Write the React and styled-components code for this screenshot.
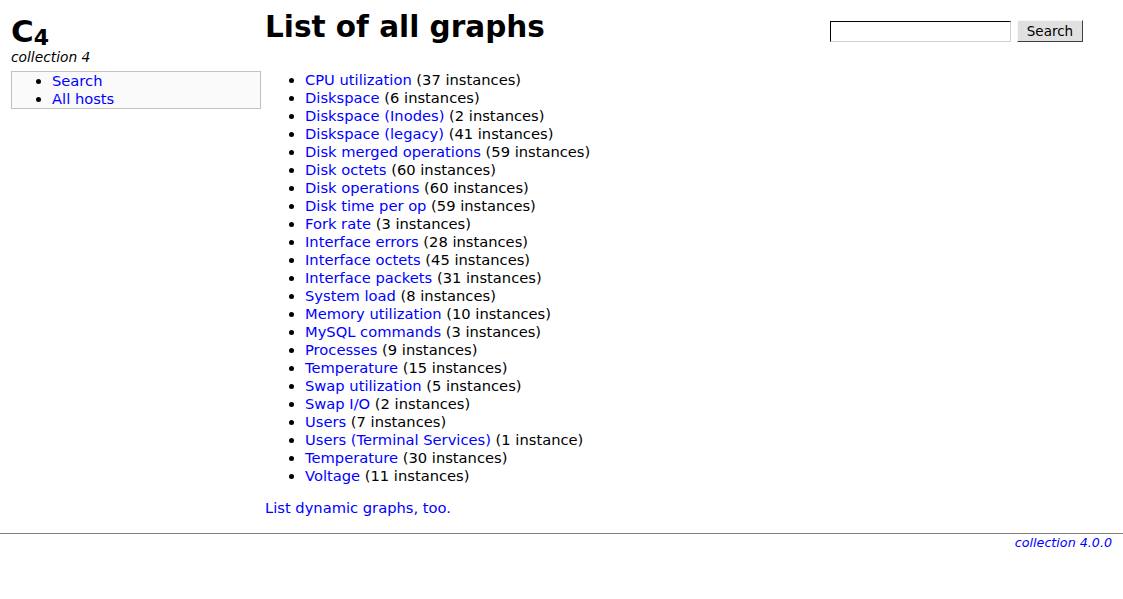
import React from "react";
import styled, { createGlobalStyle } from "styled-components";

const graphs = [
  ["CPU utilization", "37 instances"],
  ["Diskspace", "6 instances"],
  ["Diskspace (Inodes)", "2 instances"],
  ["Diskspace (legacy)", "41 instances"],
  ["Disk merged operations", "59 instances"],
  ["Disk octets", "60 instances"],
  ["Disk operations", "60 instances"],
  ["Disk time per op", "59 instances"],
  ["Fork rate", "3 instances"],
  ["Interface errors", "28 instances"],
  ["Interface octets", "45 instances"],
  ["Interface packets", "31 instances"],
  ["System load", "8 instances"],
  ["Memory utilization", "10 instances"],
  ["MySQL commands", "3 instances"],
  ["Processes", "9 instances"],
  ["Temperature", "15 instances"],
  ["Swap utilization", "5 instances"],
  ["Swap I/O", "2 instances"],
  ["Users", "7 instances"],
  ["Users (Terminal Services)", "1 instance"],
  ["Temperature", "30 instances"],
  ["Voltage", "11 instances"],
];

const GlobalStyle = createGlobalStyle`
  body {
    margin: 0;
    background: #fff;
    color: #000;
    font-family: "DejaVu Sans", Verdana, sans-serif;
    font-size: 14.7px;
    line-height: 18px;
  }
  a {
    color: #0000ff;
    text-decoration: none;
  }
`;

const Page = styled.div`
  display: flex;
  align-items: flex-start;
  padding: 0 40px 0 11px;
`;

const Sidebar = styled.div`
  width: 250px;
  flex: none;
`;

const Logo = styled.div`
  font-size: 31px;
  font-weight: bold;
  line-height: 34px;
  margin-top: 14px;
  height: 32px;

  sub {
    font-size: 22px;
    vertical-align: -3px;
  }
`;

const Tagline = styled.div`
  font-style: italic;
  font-size: 13.8px;
  margin-top: 2px;
  margin-bottom: 5px;
`;

const Menu = styled.ul`
  margin: 0;
  padding: 0 0 0 40px;
  border: 1px solid #c0c0c0;
  background: #fafafa;
`;

const Main = styled.div`
  flex: 1;
  margin-left: 4px;
`;

const TopRow = styled.div`
  display: flex;
  justify-content: space-between;
  align-items: flex-start;
`;

const Heading = styled.h1`
  margin: 10px 0 0;
  font-size: 29.5px;
  line-height: 34px;
  font-weight: bold;
`;

const SearchForm = styled.form`
  display: flex;
  gap: 6px;
  margin-top: 20px;
`;

const SearchInput = styled.input`
  box-sizing: border-box;
  width: 181px;
  height: 21px;
  margin: 1px 0 0;
  padding: 1px 2px;
  border: 1px solid;
  border-color: #000 #d0d0d0 #d0d0d0 #000;
  background: #fff;
  font: 13.5px "DejaVu Sans", sans-serif;
`;

const SearchButton = styled.button`
  box-sizing: border-box;
  width: 66px;
  height: 22px;
  padding: 0;
  border: 1px solid;
  border-color: #f8f8f8 #404040 #404040 #f8f8f8;
  background: #e0e0e0;
  color: #000;
  font: 13.5px "DejaVu Sans", sans-serif;
`;

const GraphList = styled.ul`
  margin: 27px 0 0;
  padding-left: 40px;
`;

const Footnote = styled.p`
  margin: 14px 0 0;
`;

const Rule = styled.hr`
  margin: 16px 0 0;
  border: none;
  border-top: 1px solid #808080;
`;

const Footer = styled.div`
  text-align: right;
  padding-right: 11px;
  font-size: 12.7px;
  font-style: italic;
`;

export default function App() {
  return (
    <>
      <GlobalStyle />
      <Page>
        <Sidebar>
          <Logo>
            C<sub>4</sub>
          </Logo>
          <Tagline>collection 4</Tagline>
          <Menu>
            <li>
              <a href="#">Search</a>
            </li>
            <li>
              <a href="#">All hosts</a>
            </li>
          </Menu>
        </Sidebar>
        <Main>
          <TopRow>
            <Heading>List of all graphs</Heading>
            <SearchForm onSubmit={(e) => e.preventDefault()}>
              <SearchInput type="text" />
              <SearchButton type="submit">Search</SearchButton>
            </SearchForm>
          </TopRow>
          <GraphList>
            {graphs.map(([name, count], i) => (
              <li key={i}>
                <a href="#">{name}</a> ({count})
              </li>
            ))}
          </GraphList>
          <Footnote>
            <a href="#">List dynamic graphs, too.</a>
          </Footnote>
        </Main>
      </Page>
      <Rule />
      <Footer>
        <a href="#">collection 4.0.0</a>
      </Footer>
    </>
  );
}
